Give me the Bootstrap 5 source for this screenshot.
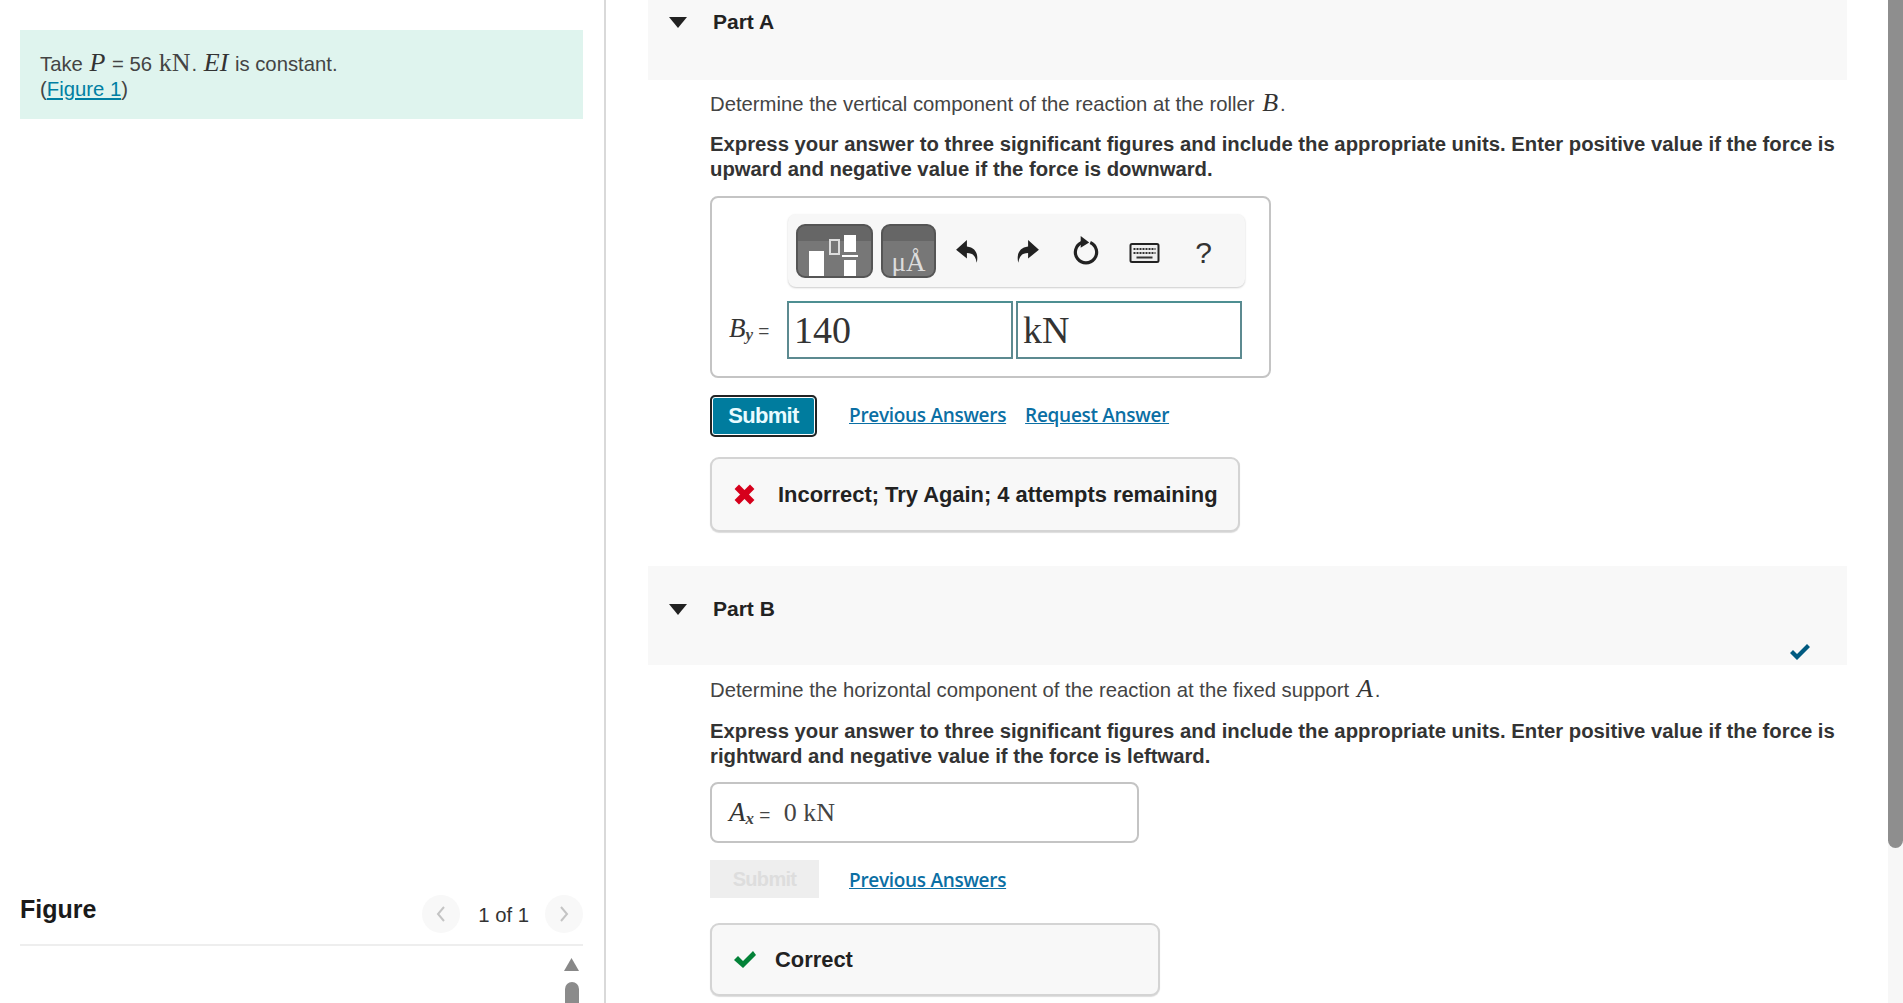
<!DOCTYPE html>
<html lang="en">

<head>
    <meta charset="UTF-8" />
    <meta name="viewport" content="width=device-width, initial-scale=1.0" />
    <link href="https://cdn.jsdelivr.net/npm/bootstrap@5.3.0/dist/css/bootstrap.min.css" rel="stylesheet">
    <title>Part A and Part B</title>
    <style>
        html, body { height: 1003px; overflow: hidden; }
        body { font-family: "Liberation Sans", Arial, sans-serif; font-size: 20.3px; line-height: 25px; color: #333; }
        i.mth, .mth { font-family: "Liberation Serif", "Times New Roman", serif; font-size: 26px; line-height: 0; color: #333; padding: 0 2px; }
        .mth-up { font-family: "Liberation Serif", "Times New Roman", serif; font-size: 24px; line-height: 0; }
        .entry-label sub .mth-up, .saved-ans sub .mth-up { font-size: 17px; font-style: italic; font-weight: 700; }

        .left-pane { width: 606px; height: 1003px; border-right: 2px solid #d9d9d9; padding: 30px 21px 0 20px; flex: none; }
        .intro-box { background: #dff4ee; height: 89px; padding: 22px 20px 0; color: #444; }
        .intro-box .mth, .intro-box .mth-up { font-size: 26px; padding: 0 1px; }
        .intro-box a { color: #007fa3; }
        .fig-head { height: 60px; border-bottom: 2px solid #eee; margin-top: auto; padding-bottom: 12px; }
        .fig-title { font-size: 25px; font-weight: 700; color: #1a1a1a; }
        .fig-nav { padding-top: 10px; }
        .fig-pager { margin: 0 16px 0 18px; padding-top: 3px; }
        .fig-arrow { width: 38px; height: 38px; border-radius: 50%; background: #f8f8f8; }
        .fig-scroll { height: 57px; padding-right: 4px; }
        .fig-up { flex: none; margin-top: 12px; }
        .fig-thumb { width: 14px; height: 36px; background: #8b8b8b; border-radius: 7px 7px 0 0; margin-top: 11px; }

        .right-pane { padding-left: 42px; width: 1242px; flex: none; }
        .part-head { background: #f8f8f8; margin-right: 1px; padding-left: 21px; }
        .part-a { height: 80px; padding-top: 9px; }
        .part-b { height: 99px; margin-top: 34px; padding-top: 30px; }
        .part-name { font-size: 21px; font-weight: 700; color: #222; margin-left: 26px; }
        .part-check { right: 36px; bottom: 4px; }
        .part-body { padding-left: 62px; padding-right: 6px; }
        .task-text { margin-top: 12px; margin-bottom: 15px; color: #444; }
        .task-bold { font-weight: 700; color: #333; margin-bottom: 14px; }
        .part-b + .part-body .task-text { margin-top: 13px; margin-bottom: 16px; }
        .part-b + .part-body .task-bold { margin-bottom: 13px; }

        .math-box { width: 561px; height: 182px; border: 2px solid #c4c4c4; border-radius: 8px; padding: 16px 0 0 17px; }
        .tool-row { width: 457px; height: 73px; margin-left: 59px; background: #f7f7f7; border-radius: 8px; box-shadow: 0 1px 2px #ccc; padding: 9px 8px; }
        .tool-btn { height: 54px; border: 2px solid #555; border-radius: 9px; background: linear-gradient(#666 0, #666 30%, #777 31%, #777 100%); color: #fff; overflow: hidden; flex: none; }
        .tool-tpl { width: 77px; }
        .tool-unit { width: 55px; margin-right: 2px; font-family: "Liberation Serif", serif; font-size: 27px; line-height: 28px; padding-top: 22px; text-align: center; color: #ddd; }
        .tool-ico { width: 59px; flex: none; padding-top: 3px; }
        .tool-q { font-size: 30px; color: #333; }
        .entry-row { margin-top: 14px; }
        .entry-label { width: 58px; font-size: 19px; color: #444; white-space: nowrap; }
        .entry-label .mth { font-size: 27px; padding: 0; }
        .entry-in { width: 226px; height: 58px; border: 2px solid #5c8a90; border-top-color: #4d8f92; font-family: "Liberation Serif", serif; font-size: 38px; line-height: 54px; padding-left: 5px; color: #333; }
        .entry-in + .entry-in { margin-left: 3px; }

        .act-row { margin-top: 17px; height: 41px; }
        .act-submit { width: 107px; height: 42px; padding: 0; border: 2px solid #222; background: #007c9e; color: #e8fbff; font-size: 22px; font-weight: 700; border-radius: 5px; letter-spacing: -.7px; box-shadow: inset 0 0 0 1px #fff; }
        .btn.act-off:disabled { width: 109px; height: 38px; margin: 0 2px 3px 0; border: 0; background: #eee; color: #ddd; opacity: 1; border-radius: 0; box-shadow: none; font-size: 20px; }
        .act-link { font-family: "Open Sans", sans-serif; font-weight: 600; font-size: 19px; color: #0b6fa4; letter-spacing: -.3px; }
        .act-link + .act-link { margin-left: 19px; }
        .fb-box { border: 2px solid #d4d4d4; border-radius: 9px; background: #f8f8f8; font-size: 21.9px; font-weight: 700; color: #222; box-shadow: 0 1px 1px #ddd; }
        .fb-bad { width: 530px; height: 75px; margin-top: 21px; padding-left: 21px; }
        .fb-bad svg { margin-right: 22px; }
        .fb-good { width: 450px; height: 73px; margin-top: 22px; padding-left: 21px; }
        .fb-good svg { margin-right: 18px; }

        .saved-ans { width: 429px; height: 61px; border: 2px solid #c4c4c4; border-radius: 8px; padding: 3px 0 0 17px; font-size: 19px; color: #444; }
        .saved-ans .mth { font-size: 27px; padding: 0; }
        .saved-val { margin-left: 8px; font-size: 26px; }

        .page-track { width: 15px; height: 1003px; background: #f7f7f7; flex: none; margin-left: auto; }
        .page-thumb { height: 848px; background: #8e8e8e; border-radius: 0 0 8px 8px; }
    </style>
</head>

<body>
    <div class="d-flex">

        <!-- enunciado y figura -->
        <div class="left-pane d-flex flex-column">
            <div class="intro-box">
                Take <i class="mth">P</i> = 56 <span class="mth-up">kN</span>. <i class="mth">EI</i> is constant.<br>
                (<a href="#">Figure 1</a>)
            </div>

            <div class="fig-head d-flex align-items-center justify-content-between">
                <span class="fig-title">Figure</span>
                <div class="fig-nav d-flex align-items-center">
                    <span class="fig-arrow d-flex align-items-center justify-content-center">
                        <svg width="12" height="18" viewBox="0 0 12 18"><path d="M9 2 3 9l6 7" fill="none" stroke="#c4c4c4" stroke-width="2"/></svg>
                    </span>
                    <span class="fig-pager">1 of 1</span>
                    <span class="fig-arrow d-flex align-items-center justify-content-center">
                        <svg width="12" height="18" viewBox="0 0 12 18"><path d="M3 2l6 7-6 7" fill="none" stroke="#c4c4c4" stroke-width="2"/></svg>
                    </span>
                </div>
            </div>
            <div class="fig-scroll d-flex flex-column align-items-end">
                <svg class="fig-up" width="15" height="13" viewBox="0 0 15 14" preserveAspectRatio="none"><path d="M7.500 0 15 14H0z" fill="#888"/></svg>
                <div class="fig-thumb"></div>
            </div>
        </div>

        <!-- partes -->
        <div class="right-pane">
            <div class="part-head part-a d-flex align-items-start">
                <svg class="mt-2" width="18" height="11" viewBox="0 0 18 11"><path d="M0 0h18L9 11z" fill="#222"/></svg>
                <span class="part-name">Part A</span>
            </div>
            <div class="part-body">
                <p class="task-text">Determine the vertical component of the reaction at the roller <i class="mth">B</i>.</p>
                <p class="task-bold">Express your answer to three significant figures and include the appropriate units. Enter positive value if the force is upward and negative value if the force is downward.</p>

                <div class="math-box">
                    <div class="tool-row d-flex align-items-center">
                        <div class="tool-btn tool-tpl me-2">
                            <svg width="73" height="50" viewBox="0 0 73 50">
                                <rect x="11" y="25" width="15" height="25" fill="#fff"/>
                                <rect x="32" y="14" width="9" height="14" fill="none" stroke="#ddd" stroke-width="2"/>
                                <rect x="46" y="9" width="12" height="17" fill="#fff"/>
                                <rect x="44" y="29" width="16" height="2" fill="#fff"/>
                                <rect x="46" y="34" width="12" height="16" fill="#fff"/>
                            </svg>
                        </div>
                        <div class="tool-btn tool-unit">μÅ</div>
                        <div class="tool-ico text-center">
                            <svg width="26" height="30" viewBox="0 0 24 26"><path d="M11 2 1 11l10 8v-5c5 0 8 2 9 9 2-8-1-14-9-15z" fill="#222"/></svg>
                        </div>
                        <div class="tool-ico text-center">
                            <svg width="26" height="30" viewBox="0 0 24 26"><path d="M13 2l10 9-10 8v-5c-5 0-8 2-9 9-2-8 1-14 9-15z" fill="#222"/></svg>
                        </div>
                        <div class="tool-ico text-center">
                            <svg width="28" height="34" viewBox="0 0 26 32"><path d="M9 7a10 10 0 1 0 8 0" fill="none" stroke="#222" stroke-width="3"/><path d="M8 1l8 6-8 5z" fill="#222"/></svg>
                        </div>
                        <div class="tool-ico text-center">
                            <svg width="33" height="20" viewBox="0 0 30 20"><rect x="1" y="1" width="28" height="18" rx="1.5" fill="#eee" stroke="#222" stroke-width="2"/><path d="M4 6h22M4 10h22" stroke="#333" stroke-width="2" stroke-dasharray="2 1"/><path d="M7 14.500h16" stroke="#333" stroke-width="2"/></svg>
                        </div>
                        <div class="tool-ico text-center tool-q">?</div>
                    </div>
                    <div class="entry-row d-flex align-items-center">
                        <div class="entry-label"><i class="mth">B</i><sub><i class="mth-up">y</i></sub> =</div>
                        <div class="entry-in">140</div>
                        <div class="entry-in">kN</div>
                    </div>
                </div>

                <div class="act-row d-flex align-items-center">
                    <button type="button" class="btn act-submit">Submit</button>
                    <a href="#" class="act-link ms-4 ps-2">Previous Answers</a>
                    <a href="#" class="act-link">Request Answer</a>
                </div>

                <div class="fb-box fb-bad d-flex align-items-center">
                    <svg width="23" height="23" viewBox="0 0 23 23"><path d="M3 6l3-3 5.500 5.500L17 3l3 3-5.500 5.500L20 17l-3 3-5.500-5.500L6 20l-3-3 5.500-5.500z" fill="#d6001c" stroke="#d6001c" stroke-width="2"/></svg>
                    <span>Incorrect; Try Again; 4 attempts remaining</span>
                </div>
            </div>

            <div class="part-head part-b d-flex align-items-start position-relative">
                <svg class="mt-2" width="18" height="11" viewBox="0 0 18 11"><path d="M0 0h18L9 11z" fill="#222"/></svg>
                <span class="part-name">Part B</span>
                <svg class="part-check position-absolute" width="22" height="18" viewBox="0 0 22 18"><path d="M1 10l3-3 4 4L18 1l3 3L8 17z" fill="#005a80"/></svg>
            </div>
            <div class="part-body">
                <p class="task-text">Determine the horizontal component of the reaction at the fixed support <i class="mth">A</i>.</p>
                <p class="task-bold">Express your answer to three significant figures and include the appropriate units. Enter positive value if the force is rightward and negative value if the force is leftward.</p>

                <div class="saved-ans d-flex align-items-center">
                    <span><i class="mth">A</i><sub><i class="mth-up">x</i></sub> = <span class="mth-up saved-val">0 kN</span></span>
                </div>

                <div class="act-row d-flex align-items-center">
                    <button type="button" class="btn act-submit act-off" disabled>Submit</button>
                    <a href="#" class="act-link ms-4 ps-1">Previous Answers</a>
                </div>

                <div class="fb-box fb-good d-flex align-items-center">
                    <svg width="24" height="19" viewBox="0 0 24 19"><path d="M1 10l4-4 5 5L20 1l3 4L10 18z" fill="#038238"/></svg>
                    <span>Correct</span>
                </div>
            </div>
        </div>

        <div class="page-track">
            <div class="page-thumb"></div>
        </div>
    </div>

    <script src="https://cdn.jsdelivr.net/npm/bootstrap@5.3.0/dist/js/bootstrap.bundle.min.js"></script>
</body>

</html>
